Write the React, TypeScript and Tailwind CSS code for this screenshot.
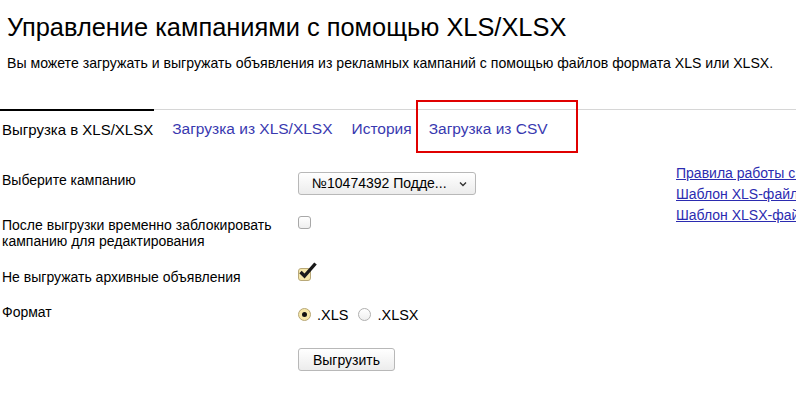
import React from 'react'

const font = { fontFamily: '"Liberation Sans", Arial, sans-serif' }

function Checkbox({ checked }: { checked?: boolean }) {
  return (
    <span className="relative block w-[13px] h-[13px]">
      <span
        className={`absolute inset-0 rounded-[3px] border ${
          checked ? 'border-[#b8a878] bg-[#f6e7a9]' : 'border-[#a8a8a8] bg-gradient-to-b from-white to-[#eeeeee]'
        }`}
      />
      {checked && (
        <svg className="absolute left-[1px] top-[-6px]" width="18" height="17" viewBox="0 0 18 17">
          <path d="M1.5 10 L5.5 14 L16.5 1.5" fill="none" stroke="#1a1a1a" strokeWidth="3.4" strokeLinejoin="miter" />
        </svg>
      )}
    </span>
  )
}

function Radio({ checked }: { checked?: boolean }) {
  return (
    <span
      className={`flex items-center justify-center w-[13px] h-[13px] rounded-full border ${
        checked ? 'border-[#b8a878] bg-[#f6e7a9]' : 'border-[#b0b0b0] bg-gradient-to-b from-white to-[#eeeeee]'
      }`}
    >
      {checked && <span className="w-[5px] h-[5px] rounded-full bg-[#111]" />}
    </span>
  )
}

export default function App() {
  return (
    <div className="relative w-[796px] h-[404px] overflow-hidden bg-white text-black" style={font}>
      <h1 className="pl-[7px] pt-[12px] text-[25.4px] leading-[30px] font-normal whitespace-nowrap">
        Управление кампаниями с помощью XLS/XLSX
      </h1>
      <p className="pl-[7px] mt-[13px] text-[14.1px] leading-[16px] whitespace-nowrap">
        Вы можете загружать и выгружать объявления из рекламных кампаний с помощью файлов формата XLS или XLSX.
      </p>

      <div className="mt-[38px] flex h-[29px] border-t border-[#d6d6d6] whitespace-nowrap">
        <div className="-mt-[1px] border-t-[2px] border-black pl-[2px] pr-[1px] pt-[10px] text-[15px] leading-[18px]">
          Выгрузка в XLS/XLSX
        </div>
        <a className="ml-[18px] pt-[10px] text-[15.5px] leading-[18px] text-[#3939b0]">Загрузка из XLS/XLSX</a>
        <a className="ml-[19px] pt-[10px] text-[15.5px] leading-[18px] text-[#3939b0]">История</a>
        <a className="ml-[17px] pt-[10px] text-[15.5px] leading-[18px] text-[#3939b0]">Загрузка из CSV</a>
      </div>

      <div className="absolute left-[416px] top-[100px] w-[162px] h-[53px] border-2 border-[#e00000]" />

      <div className="mt-[34px] flex text-[14px] leading-[16px]">
        <div className="w-[676px] shrink-0 pl-[2px]">
          <div className="flex h-[44px]">
            <div className="w-[296px]">Выберите кампанию</div>
            <div className="h-[23px] w-[178px] flex items-center justify-between rounded-[3px] border border-[#b8b8b8] bg-gradient-to-b from-white to-[#ececec] pl-[13px] pr-[8px]">
              <span className="-mt-[1px]">№10474392 Подде...</span>
              <svg width="8" height="6" viewBox="0 0 8 6">
                <path d="M1 1.5 L4 4.5 L7 1.5" fill="none" stroke="#333" strokeWidth="1.4" />
              </svg>
            </div>
          </div>
          <div className="flex h-[52px]">
            <div className="w-[296px] pt-[1px]">
              После выгрузки временно заблокировать
              <br />
              кампанию для редактирования
            </div>
            <Checkbox />
          </div>
          <div className="flex h-[36px]">
            <div className="w-[296px] pt-[1px]">Не выгружать архивные объявления</div>
            <Checkbox checked />
          </div>
          <div className="flex h-[44px]">
            <div className="w-[296px]">Формат</div>
            <div className="flex items-center h-[13px] mt-[4px] text-[14.5px]">
              <Radio checked />
              <span className="ml-[6px]">.XLS</span>
              <span className="ml-[10px]">
                <Radio />
              </span>
              <span className="ml-[6px]">.XLSX</span>
            </div>
          </div>
          <div className="flex">
            <div className="w-[296px]" />
            <button className="h-[23px] w-[97px] rounded-[3px] border border-[#b8b8b8] bg-gradient-to-b from-white to-[#ececec] text-[14px] leading-[16px]">
              Выгрузить
            </button>
          </div>
        </div>
        <div className="-mt-[9px] flex flex-col text-[14px] leading-[21px] whitespace-nowrap">
          <a className="text-[#2b2bb0] underline">Правила работы с файлами</a>
          <a className="text-[#2b2bb0] underline">Шаблон XLS-файла</a>
          <a className="text-[#2b2bb0] underline">Шаблон XLSX-файла</a>
        </div>
      </div>
    </div>
  )
}
